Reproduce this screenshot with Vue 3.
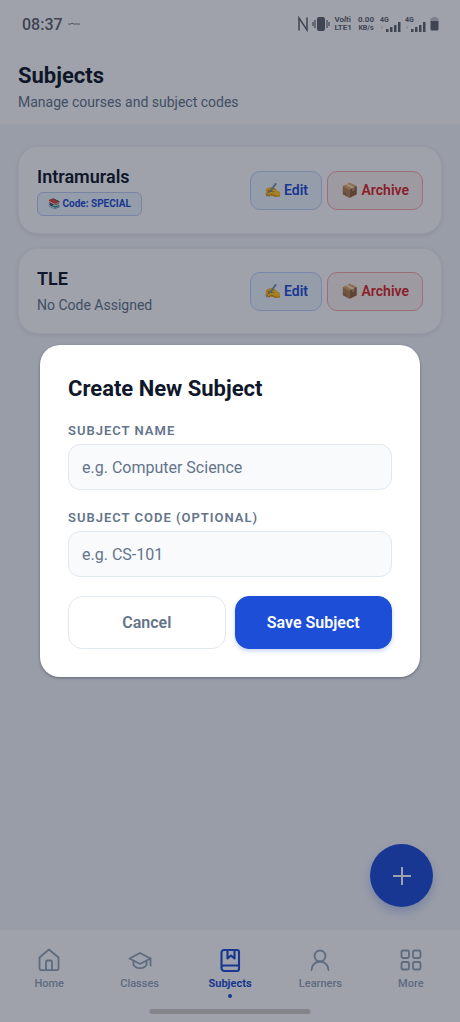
<script setup>
import { ref } from 'vue'

const subjects = [
  { name: 'Intramurals', code: 'SPECIAL' },
  { name: 'TLE', code: '' }
]

const tabs = [
  { label: 'Home', icon: 'home' },
  { label: 'Classes', icon: 'classes' },
  { label: 'Subjects', icon: 'subjects', active: true },
  { label: 'Learners', icon: 'learners' },
  { label: 'More', icon: 'more' }
]

const name = ref('')
const code = ref('')
</script>

<template>
  <div class="screen">
    <div class="top">
      <div class="status">
        <div class="status-left">
          <span class="clock">08:37</span>
          <svg width="14" height="4" viewBox="0 0 14 4" aria-hidden="true">
            <path d="M1 2h3M4 1.500h2M6 2h3M9 2h4" stroke="currentColor" opacity=".8" />
          </svg>
        </div>
        <div class="status-right">
          <svg width="10" height="16" viewBox="0 0 10 16" aria-hidden="true">
            <path d="M1 14.500V2l8 12V1.500" fill="none" stroke="currentColor" stroke-width="1.500" />
          </svg>
          <svg width="18" height="16" viewBox="0 0 18 16" aria-hidden="true">
            <rect x="5" y="1" width="8" height="14" rx="2" fill="currentColor" />
            <path d="M3 4v8M1 6v4M15 4v8M17 6v4" stroke="currentColor" stroke-width="1.200" />
          </svg>
          <span class="tiny">Vo<i>lt</i>i<br />LTE1</span>
          <span class="tiny speed">0.00<br /><small>KB/s</small></span>
          <span v-for="n in 2" :key="n" class="signal">
            <b>4G</b>
            <svg width="21" height="11" viewBox="0 0 21 11" aria-hidden="true">
              <path d="M6 8h2.500v3H6zM10 6h2.500v5H10zM14 4h2.500v7H14zM18 1h2.500v10H18z" fill="currentColor" />
              <path d="M2 5v3" stroke="currentColor" opacity=".3" />
            </svg>
          </span>
          <svg class="battery" width="9" height="14" viewBox="0 0 9 14" aria-hidden="true">
            <path d="M2.500 0h4v1h1.500l.500.500V4h-8V1.500L1 1h1.500z" fill="currentColor" opacity=".35" />
            <path d="M.500 4h8v8q0 1.500-1.500 1.500H2Q.500 13.500.500 12z" fill="currentColor" />
          </svg>
        </div>
      </div>
      <header class="header">
        <h1>Subjects</h1>
        <p>Manage courses and subject codes</p>
      </header>
    </div>

    <main class="list">
      <article v-for="s in subjects" :key="s.name" class="card">
        <div class="info">
          <h2>{{ s.name }}</h2>
          <span v-if="s.code" class="badge">📚 Code: {{ s.code }}</span>
          <span v-else class="no-code">No Code Assigned</span>
        </div>
        <div class="actions">
          <button type="button" class="edit">✍️ Edit</button>
          <button type="button" class="archive">📦 Archive</button>
        </div>
      </article>
    </main>

    <button type="button" class="fab" aria-label="Add subject">
      <svg width="20" height="20" viewBox="0 0 20 20" aria-hidden="true">
        <path d="M10 1v18M1 10h18" stroke="currentColor" stroke-width="2" />
      </svg>
    </button>

    <nav class="nav">
      <a v-for="t in tabs" :key="t.label" href="#" :class="{ active: t.active }">
        <svg
          width="26" height="26" viewBox="0 0 26 26" fill="none" stroke="currentColor"
          stroke-width="1.800" stroke-linecap="round" stroke-linejoin="round" aria-hidden="true"
        >
          <template v-if="t.icon === 'home'">
            <path d="M3.500 10.500 13 2.500l9.500 8v10.700a2 2 0 0 1-2 2h-15a2 2 0 0 1-2-2z" />
            <path d="M10 23v-8a1.500 1.500 0 0 1 1.500-1.500h3a1.500 1.500 0 0 1 1.500 1.500v8" />
          </template>
          <template v-else-if="t.icon === 'classes'">
            <path d="M2.500 11.500 13 6l10.500 5.500L13 17z" />
            <path d="M6.500 14v4c1.500 2.200 4 3.200 6.500 3.200s5-1 6.500-3.200v-4M23.500 11.500v7" />
          </template>
          <template v-else-if="t.icon === 'subjects'">
            <path stroke-width="2.100" d="M4.500 20.800V5.500A2.500 2.500 0 0 1 7 3h13a2 2 0 0 1 2 2v17a2 2 0 0 1-2 2H7.500a3 3 0 0 1-3-3.200A2.500 2.500 0 0 1 7 18.500h15" />
            <path stroke-width="2.100" d="M10.500 3v8.500l3.500-3 3.500 3V3" />
          </template>
          <template v-else-if="t.icon === 'learners'">
            <circle cx="13" cy="9" r="5.500" />
            <path d="M4.500 23a8.500 8.500 0 0 1 17 0" />
          </template>
          <template v-else>
            <rect x="3.500" y="3.500" width="7.500" height="7.500" rx="1.500" />
            <rect x="15" y="3.500" width="7.500" height="7.500" rx="1.500" />
            <rect x="3.500" y="15" width="7.500" height="7.500" rx="1.500" />
            <rect x="15" y="15" width="7.500" height="7.500" rx="1.500" />
          </template>
        </svg>
        <span>{{ t.label }}</span>
      </a>
    </nav>
    <div class="overlay">
      <form class="modal" role="dialog" aria-labelledby="dialog-title" @submit.prevent>
        <h2 id="dialog-title">Create New Subject</h2>
        <label for="subject-name">SUBJECT NAME</label>
        <input id="subject-name" v-model="name" type="text" placeholder="e.g. Computer Science" />
        <label for="subject-code">SUBJECT CODE (OPTIONAL)</label>
        <input id="subject-code" v-model="code" type="text" placeholder="e.g. CS-101" />
        <div class="buttons">
          <button type="button" class="cancel">Cancel</button>
          <button type="submit" class="save">Save Subject</button>
        </div>
      </form>
    </div>
    <div class="home-bar"></div>
  </div>
</template>

<style>
body {
  margin: 0;
}
</style>

<style scoped>
.screen {
  position: relative;
  display: flex;
  flex-direction: column;
  min-height: 100vh;
  background: #f6f7fc;
  font-family: Roboto, "Noto Sans", sans-serif;
  color: #0f172a;
}
.screen *,
.screen {
  box-sizing: border-box;
}
h1,
h2,
p {
  margin: 0;
}
button,
input {
  font-family: inherit;
  margin: 0;
}
.top {
  background: #fff;
}
.status {
  display: flex;
  align-items: center;
  justify-content: space-between;
  height: 48px;
  padding: 0 21px 0 22px;
  color: #60646e;
}
.status-left,
.status-right {
  display: flex;
  align-items: center;
  gap: 4px;
}
.clock {
  font-size: 16px;
  font-weight: 500;
}
.tiny {
  font-size: 8px;
  line-height: 8px;
  font-weight: 700;
}
.speed {
  margin: 0 2px;
  text-align: center;
}
.speed small {
  font-size: 7px;
}
.signal {
  display: flex;
  flex-direction: column;
  font-size: 7px;
  line-height: 7px;
}
.signal svg {
  margin-top: -3px;
}
.header {
  padding: 14px 18px 12px;
}
.header h1 {
  margin-bottom: 2px;
  font-size: 22px;
  line-height: 28px;
  font-weight: 700;
}
.header p {
  font-size: 14px;
  line-height: 20px;
  color: #64748b;
}
.list {
  display: flex;
  flex-direction: column;
  gap: 14px;
  padding: 22px 18px;
  flex: 1;
}
.card {
  display: flex;
  align-items: center;
  justify-content: space-between;
  padding: 17px 18px;
  border: 1px solid #f1f4f8;
  border-radius: 20px;
  background: #fff;
  box-shadow: 0 1px 4px rgba(15, 23, 42, 0.1);
}
.info {
  display: flex;
  flex-direction: column;
  align-items: flex-start;
  gap: 3px;
}
.info h2 {
  font-size: 18px;
  line-height: 25px;
  font-weight: 600;
}
.badge {
  padding: 0 10px;
  border: 1px solid #bfcdf5;
  border-radius: 6px;
  background: #eff6ff;
  color: #1d4ed8;
  font-size: 10px;
  line-height: 22px;
  font-weight: 700;
}
.no-code {
  font-size: 14px;
  line-height: 22px;
  color: #64748b;
}
.actions {
  display: flex;
  gap: 5px;
}
.actions button {
  height: 39px;
  padding: 0 13px;
  border: 1px solid #bfd3fe;
  border-radius: 10px;
  background: #eff6ff;
  color: #1d4ed8;
  font-size: 14px;
  font-weight: 600;
}
.actions .archive {
  border-color: #f9a8a8;
  background: #fef2f2;
  color: #dc2626;
}
.fab {
  position: absolute;
  right: 27px;
  bottom: 115px;
  display: grid;
  place-items: center;
  width: 63px;
  height: 63px;
  padding: 0;
  border: 0;
  border-radius: 50%;
  background: #1d4ed8;
  color: #fff;
  box-shadow: 0 5px 10px rgba(29, 78, 216, 0.25);
}
.nav {
  display: flex;
  height: 92px;
  padding: 17px 4px 0;
  background: #fff;
}
.nav a {
  flex: 1;
  display: flex;
  flex-direction: column;
  align-items: center;
  gap: 3px;
  color: #94a3b8;
  font-size: 11px;
  line-height: 15px;
  font-weight: 500;
  text-decoration: none;
}
.nav a.active {
  color: #1d4ed8;
  font-weight: 700;
}
.nav a.active::after {
  content: "";
  width: 4px;
  height: 4px;
  border-radius: 50%;
  background: currentColor;
}
.overlay {
  position: absolute;
  inset: 0;
  display: flex;
  align-items: center;
  justify-content: center;
  padding: 0 40px;
  background: rgba(15, 23, 42, 0.4);
}
.modal {
  display: flex;
  flex-direction: column;
  width: 100%;
  padding: 29px 28px 28px;
  border-radius: 20px;
  background: #fff;
  box-shadow: 0 1px 3px rgba(15, 23, 42, 0.4);
}
.modal h2 {
  margin-bottom: 18px;
  font-size: 22px;
  line-height: 30px;
  font-weight: 700;
}
.modal label {
  margin-bottom: 4px;
  font-size: 13px;
  line-height: 18px;
  font-weight: 600;
  letter-spacing: 1px;
  color: #64748b;
}
.modal input {
  width: 100%;
  height: 46px;
  margin-bottom: 19px;
  padding: 0 13px;
  border: 1px solid #e2e8f0;
  border-radius: 12px;
  background: #f8fafc;
  color: #0f172a;
  font-size: 16px;
}
.modal input::placeholder {
  color: #64748b;
  opacity: 1;
}
.buttons {
  display: flex;
  gap: 9px;
}
.buttons button {
  flex: 1;
  height: 53px;
  border: 1px solid #e2e8f0;
  border-radius: 14px;
  background: #fff;
  color: #64748b;
  font-size: 16px;
  font-weight: 600;
}
.buttons .save {
  border-color: #1d4ed8;
  background: #1d4ed8;
  color: #fff;
  box-shadow: 0 2px 4px rgba(29, 78, 216, 0.25);
}
.home-bar {
  position: absolute;
  bottom: 8px;
  left: 50%;
  width: 35%;
  height: 5px;
  border-radius: 3px;
  background: #83858a;
  transform: translateX(-50%);
}
</style>
